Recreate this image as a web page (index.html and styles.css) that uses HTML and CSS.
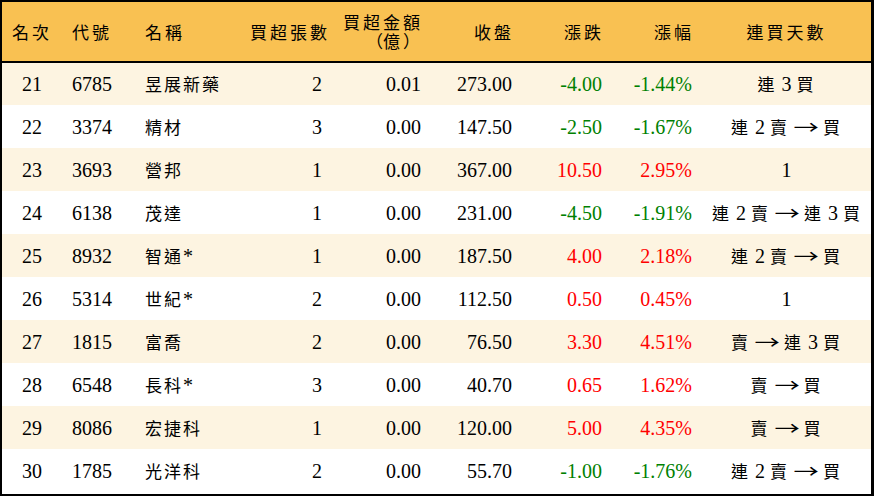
FILE: index.html
```html
<!DOCTYPE html>
<html lang="zh-Hant">
<head>
<meta charset="utf-8">
<link rel="stylesheet" href="styles.css">
</head>
<body>
<div class="board">
<table class="rank">
<colgroup>
<col class="c1"><col class="c2"><col class="c3"><col class="c4"><col class="c5"><col class="c6"><col class="c7"><col class="c8"><col class="c9">
</colgroup>
<thead>
<tr>
<th class="ctr">名次</th>
<th class="lft">代號</th>
<th class="lft">名稱</th>
<th class="rgt">買超張數</th>
<th class="rgt two">買超金額<br><span class="po">（</span>億<span class="pc">）</span></th>
<th class="rgt">收盤</th>
<th class="rgt">漲跌</th>
<th class="rgt">漲幅</th>
<th class="ctr">連買天數</th>
</tr>
</thead>
<tbody>
<tr class="odd"><td class="ctr">21</td><td class="lft">6785</td><td class="lft"><span class="zh">昱展新藥</span></td><td class="rgt">2</td><td class="rgt">0.01</td><td class="rgt">273.00</td><td class="rgt dn">-4.00</td><td class="rgt dn">-1.44%</td><td class="ctr"><span class="zh">連</span> 3 <span class="zh">買</span></td></tr>
<tr><td class="ctr">22</td><td class="lft">3374</td><td class="lft"><span class="zh">精材</span></td><td class="rgt">3</td><td class="rgt">0.00</td><td class="rgt">147.50</td><td class="rgt dn">-2.50</td><td class="rgt dn">-1.67%</td><td class="ctr"><span class="zh">連</span> 2 <span class="zh">賣</span> <span class="ar">→</span> <span class="zh">買</span></td></tr>
<tr class="odd"><td class="ctr">23</td><td class="lft">3693</td><td class="lft"><span class="zh">營邦</span></td><td class="rgt">1</td><td class="rgt">0.00</td><td class="rgt">367.00</td><td class="rgt up">10.50</td><td class="rgt up">2.95%</td><td class="ctr">1</td></tr>
<tr><td class="ctr">24</td><td class="lft">6138</td><td class="lft"><span class="zh">茂達</span></td><td class="rgt">1</td><td class="rgt">0.00</td><td class="rgt">231.00</td><td class="rgt dn">-4.50</td><td class="rgt dn">-1.91%</td><td class="ctr"><span class="zh">連</span> 2 <span class="zh">賣</span> <span class="ar">→</span> <span class="zh">連</span> 3 <span class="zh">買</span></td></tr>
<tr class="odd"><td class="ctr">25</td><td class="lft">8932</td><td class="lft"><span class="zh">智通</span>*</td><td class="rgt">1</td><td class="rgt">0.00</td><td class="rgt">187.50</td><td class="rgt up">4.00</td><td class="rgt up">2.18%</td><td class="ctr"><span class="zh">連</span> 2 <span class="zh">賣</span> <span class="ar">→</span> <span class="zh">買</span></td></tr>
<tr><td class="ctr">26</td><td class="lft">5314</td><td class="lft"><span class="zh">世紀</span>*</td><td class="rgt">2</td><td class="rgt">0.00</td><td class="rgt">112.50</td><td class="rgt up">0.50</td><td class="rgt up">0.45%</td><td class="ctr">1</td></tr>
<tr class="odd"><td class="ctr">27</td><td class="lft">1815</td><td class="lft"><span class="zh">富喬</span></td><td class="rgt">2</td><td class="rgt">0.00</td><td class="rgt">76.50</td><td class="rgt up">3.30</td><td class="rgt up">4.51%</td><td class="ctr"><span class="zh">賣</span> <span class="ar">→</span> <span class="zh">連</span> 3 <span class="zh">買</span></td></tr>
<tr><td class="ctr">28</td><td class="lft">6548</td><td class="lft"><span class="zh">長科</span>*</td><td class="rgt">3</td><td class="rgt">0.00</td><td class="rgt">40.70</td><td class="rgt up">0.65</td><td class="rgt up">1.62%</td><td class="ctr"><span class="zh">賣</span> <span class="ar">→</span> <span class="zh">買</span></td></tr>
<tr class="odd"><td class="ctr">29</td><td class="lft">8086</td><td class="lft"><span class="zh">宏捷科</span></td><td class="rgt">1</td><td class="rgt">0.00</td><td class="rgt">120.00</td><td class="rgt up">5.00</td><td class="rgt up">4.35%</td><td class="ctr"><span class="zh">賣</span> <span class="ar">→</span> <span class="zh">買</span></td></tr>
<tr><td class="ctr">30</td><td class="lft">1785</td><td class="lft"><span class="zh">光洋科</span></td><td class="rgt">2</td><td class="rgt">0.00</td><td class="rgt">55.70</td><td class="rgt dn">-1.00</td><td class="rgt dn">-1.76%</td><td class="ctr"><span class="zh">連</span> 2 <span class="zh">賣</span> <span class="ar">→</span> <span class="zh">買</span></td></tr>
</tbody>
</table>
</div>
</body>
</html>
```

FILE: styles.css
```css
html, body {
  margin: 0;
  padding: 0;
  background: #ffffff;
}

.board {
  width: 874px;
  height: 496px;
  box-sizing: border-box;
  border: 2px solid #000;
  border-right-width: 3px;
  background: #ffffff;
  overflow: hidden;
}

.rank {
  width: 869px;
  border-collapse: collapse;
  table-layout: fixed;
  font-family: "Liberation Serif", "Noto Sans CJK TC", serif;
  font-size: 20px;
  color: #000;
}

.c1 { width: 60px; }
.c2 { width: 73px; }
.c3 { width: 105px; }
.c4 { width: 92px; }
.c5 { width: 99px; }
.c6 { width: 91px; }
.c7 { width: 90px; }
.c8 { width: 90px; }
.c9 { width: 169px; }

.rank thead tr {
  height: 60px;
}

.rank th {
  height: 60px;
  box-sizing: border-box;
  padding: 0 10px;
  background: #f9c152;
  font-family: "Noto Sans CJK TC", sans-serif;
  font-size: 17px;
  font-weight: normal;
  letter-spacing: 3px;
  border-bottom: 2px solid #000;
  line-height: 18px;
  white-space: nowrap;
}

.rank th.rgt { padding-right: 8px; }

.rank th.two {
  padding-bottom: 2px;
  line-height: 19px;
}

.po, .pc {
  display: inline-block;
  width: 20px;
  letter-spacing: 0;
}

.po { text-align: right; }
.pc { text-align: left; }

.rank td {
  height: 43px;
  box-sizing: border-box;
  padding: 0 10px;
  line-height: 20px;
  white-space: nowrap;
}

.rank tbody tr { height: 43px; }

.rank tbody tr.odd td { background: #fdf4e1; }

.zh {
  font-family: "Noto Sans CJK TC", sans-serif;
  font-size: 17px;
  line-height: 20px;
  letter-spacing: 2px;
}

.ar {
  display: inline-block;
  font-family: "Noto Sans CJK TC", sans-serif;
  font-size: 18px;
  line-height: 20px;
  margin: 0 3px;
  transform: scaleX(1.4);
}

.ctr { text-align: center; }
.lft { text-align: left; }
.rgt { text-align: right; }

.up { color: #ff0000; }
.dn { color: #008000; }
```
